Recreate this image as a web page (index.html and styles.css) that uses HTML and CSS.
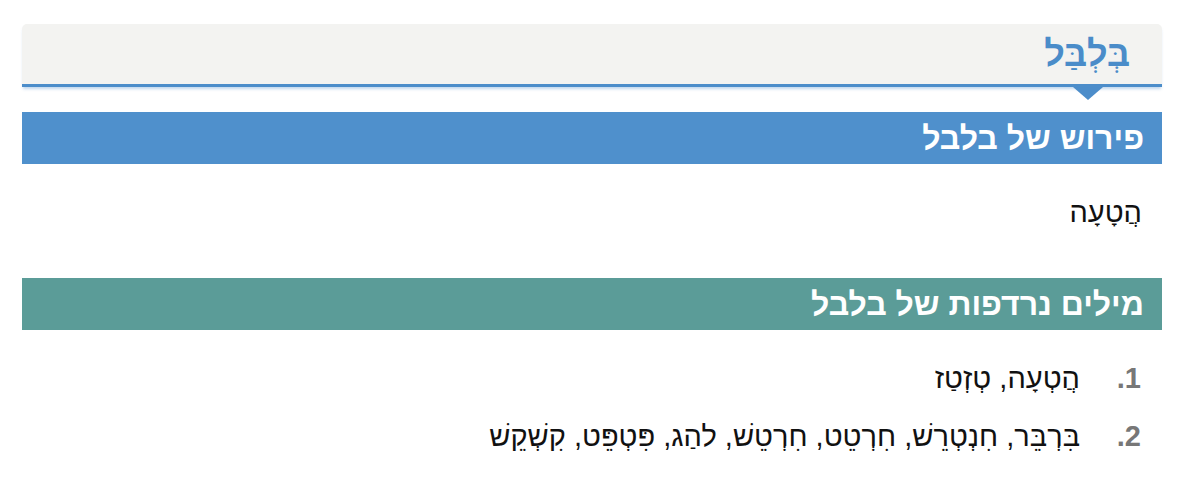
FILE: index.html
```html
<!DOCTYPE html>
<html lang="he" dir="rtl">
<head>
<meta charset="utf-8">
<link rel="stylesheet" href="styles.css">
</head>
<body>
<div class="page">
  <header class="word-head">
    <h1 class="word">בְּלְבַּל</h1>
    <span class="pointer"></span>
  </header>
  <h2 class="bar bar-blue">פירוש של בלבל</h2>
  <p class="definition">הֲטָעָה</p>
  <h2 class="bar bar-green">מילים נרדפות של בלבל</h2>
  <ol class="synonyms">
    <li>הֲטְעָה, טְזְטַז</li>
    <li>בִּרְבֵּר, חִנְטְרֵשׁ, חִרְטֵט, חִרְטֵשׁ, להַג, פִּטְפֵּט, קִשְׁקֵשׁ</li>
  </ol>
</div>
</body>
</html>
```

FILE: styles.css
```css
html, body {
  margin: 0;
  padding: 0;
  background: #ffffff;
}
body {
  font-family: "Liberation Sans", Arial, sans-serif;
  color: #111;
}
.page {
  margin: 24px 26px 0 22px;
  display: flex;
  flex-direction: column;
}
.word-head {
  position: relative;
  height: 60px;
  background: #f3f3f1;
  border-radius: 5px 5px 0 0;
  border-bottom: 3px solid #4c8dca;
  box-shadow: 0 3px 3px -1px rgba(76, 141, 202, 0.35);
  display: flex;
  align-items: center;
  padding: 0 32px;
}
.word {
  margin: 0;
  font-size: 36px;
  font-weight: bold;
  color: #4a8cc9;
  line-height: 1;
}
.pointer {
  position: absolute;
  right: 59px;
  bottom: -16px;
  width: 0;
  height: 0;
  border-left: 15px solid transparent;
  border-right: 15px solid transparent;
  border-top: 13px solid #4c8dca;
}
.bar {
  margin: 0;
  height: 52px;
  display: flex;
  align-items: center;
  padding: 0 18px;
  color: #ffffff;
  font-size: 32px;
  font-weight: bold;
}
.bar-blue {
  margin-top: 25px;
  background: #4f90cc;
}
.bar-green {
  background: #5b9c98;
}
.definition {
  margin: 30px 20px 48px;
  font-size: 29px;
  line-height: 36px;
}
.synonyms {
  margin: 30px 0 0;
  padding: 0 21px 0 0;
  list-style: none;
  counter-reset: item;
  font-size: 29px;
  line-height: 36px;
}
.synonyms li {
  counter-increment: item;
  display: flex;
  margin-bottom: 22px;
}
.synonyms li::before {
  content: counter(item) ".";
  flex: 0 0 61px;
  color: #777;
  font-weight: bold;
}
```
